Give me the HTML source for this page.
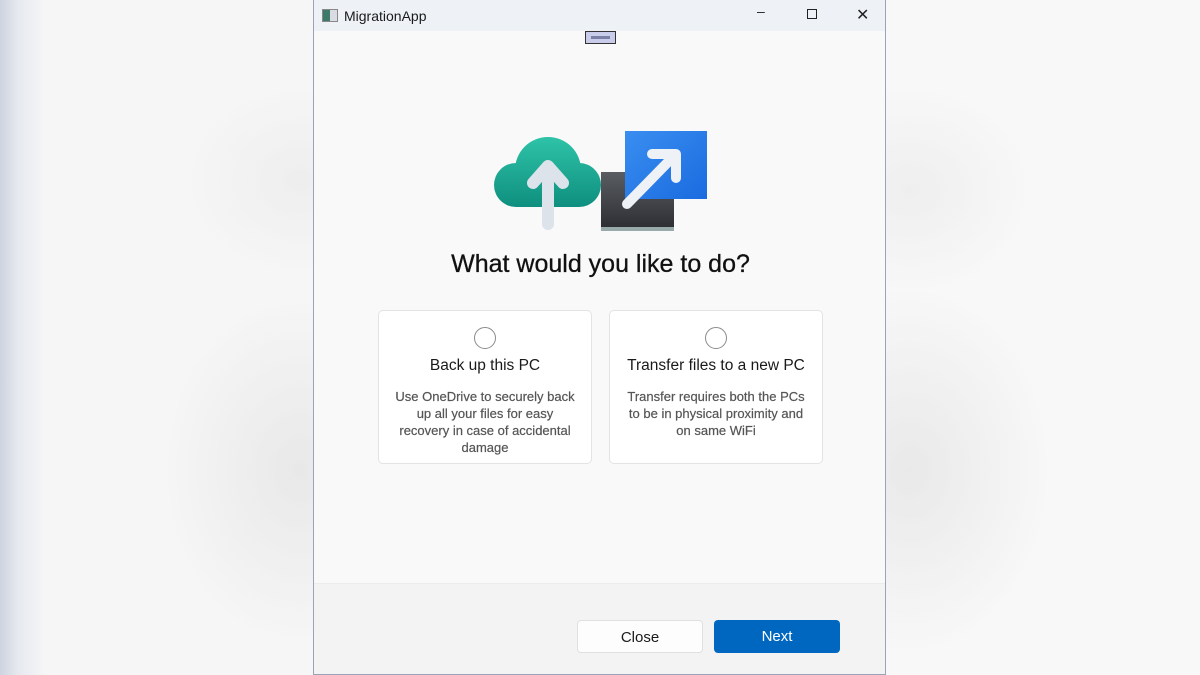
<!DOCTYPE html>
<html><head><style>
*{margin:0;padding:0;box-sizing:border-box}
body{width:1200px;height:675px;overflow:hidden;font-family:"Liberation Sans",sans-serif;position:relative;
background:
radial-gradient(ellipse 140px 180px at 300px 470px,rgba(215,215,215,.45),rgba(215,215,215,0)),
radial-gradient(ellipse 120px 100px at 300px 180px,rgba(225,225,225,.4),rgba(225,225,225,0)),
radial-gradient(ellipse 140px 180px at 910px 470px,rgba(215,215,215,.45),rgba(215,215,215,0)),
radial-gradient(ellipse 120px 100px at 910px 190px,rgba(225,225,225,.4),rgba(225,225,225,0)),
linear-gradient(90deg,#cdd3e0 0px,#e6e9ef 18px,#f6f6f7 45px,#f8f8f8 100%);}
.win{position:absolute;left:313px;top:0;width:573px;height:675px;background:#f9f9f9;border:1px solid #9aa3b8;border-top:none;overflow:hidden}
.title{height:31px;background:#eef2f7;position:relative;font-size:14px;color:#1a1a1a}
.title .ic{position:absolute;left:8px;top:9px;width:16px;height:13px;background:linear-gradient(90deg,#3d7a6a 0 50%,#d9dde3 50%);border:1px solid #888}
.title .t{position:absolute;left:30px;top:8px}
.ctl{position:absolute;top:6px;font-size:14px;color:#222}
.grip{position:absolute;left:271px;top:31px;width:31px;height:13px;background:#c9cde9;border:1px solid #333}
.grip:after{content:"";position:absolute;left:5px;top:4px;width:19px;height:3px;background:#7b80a6}
h1{position:absolute;left:0;width:573px;top:250px;text-align:center;font-size:25px;font-weight:normal;color:#111;-webkit-text-stroke:.3px #111}
.card{position:absolute;top:310px;width:214px;height:154px;background:#fff;border:1px solid #e3e3e3;border-radius:5px;text-align:center}
.radio{width:22px;height:22px;border:1.5px solid #8a8a8a;border-radius:50%;margin:16px auto 0}
.card h2{font-size:15.5px;font-weight:normal;color:#1a1a1a;margin-top:8px}
.card p{font-size:13px;color:#555;line-height:17px;margin:13px 14px 0;-webkit-text-stroke:.2px #555}
.foot{position:absolute;left:0;top:583px;width:573px;height:92px;background:#f3f3f3;border-top:1px solid #ececec}
.btn{position:absolute;top:36px;width:126px;height:33px;border-radius:4px;font-size:15px;text-align:center;line-height:33px}
</style></head><body>
<div class="win">
<div class="title"><div class="ic"></div><div class="t">MigrationApp</div>
<div class="ctl" style="left:443px;top:3px">–</div>
<div class="ctl" style="left:493px;top:9px;width:10px;height:10px;border:1.3px solid #222"></div>
<div class="ctl" style="left:542px;top:5px;font-size:16px">✕</div></div>
<div class="grip"></div>
<svg style="position:absolute;left:178px;top:130px" width="216" height="102" viewBox="0 0 216 102">
<defs><linearGradient id="cl" gradientUnits="userSpaceOnUse" x1="0" y1="7" x2="0" y2="77"><stop offset="0" stop-color="#2ec3a8"/><stop offset="1" stop-color="#0f8f7f"/></linearGradient>
<linearGradient id="bl" x1="0" y1="0" x2="1" y2="1"><stop offset="0" stop-color="#3a8ef0"/><stop offset="1" stop-color="#1a6be0"/></linearGradient>
<linearGradient id="dk" x1="0" y1="0" x2="0" y2="1"><stop offset="0" stop-color="#5a5d62"/><stop offset="1" stop-color="#2c2e32"/></linearGradient></defs>
<g fill="url(#cl)"><circle cx="24" cy="55" r="22"/><circle cx="56" cy="40" r="33"/><circle cx="87" cy="55" r="22"/><rect x="24" y="40" width="63" height="37"/></g>
<path d="M56 94 V38 M41 53 L56 36 L71 53" stroke="#dde3ea" stroke-width="12" stroke-linecap="round" stroke-linejoin="round" fill="none"/>
<rect x="109" y="42" width="73" height="57" fill="url(#dk)"/><rect x="109" y="97" width="73" height="4" fill="#9aa"/>
<rect x="133" y="1" width="82" height="68" fill="url(#bl)"/>
<path d="M135 74 L180 28 M160 24 H184 V48" stroke="#eef2f7" stroke-width="10" stroke-linecap="round" stroke-linejoin="round" fill="none"/>
</svg>
<h1>What would you like to do?</h1>
<div class="card" style="left:64px"><div class="radio"></div><h2>Back up this PC</h2><p>Use OneDrive to securely back up all your files for easy recovery in case of accidental damage</p></div>
<div class="card" style="left:295px"><div class="radio"></div><h2>Transfer files to a new PC</h2><p>Transfer requires both the PCs to be in physical proximity and on same WiFi</p></div>
<div class="foot">
<div class="btn" style="left:263px;background:#fdfdfd;border:1px solid #e0e0e0;color:#1a1a1a">Close</div>
<div class="btn" style="left:400px;background:#0067c0;color:#fff">Next</div>
</div>
</div>
</body></html>
